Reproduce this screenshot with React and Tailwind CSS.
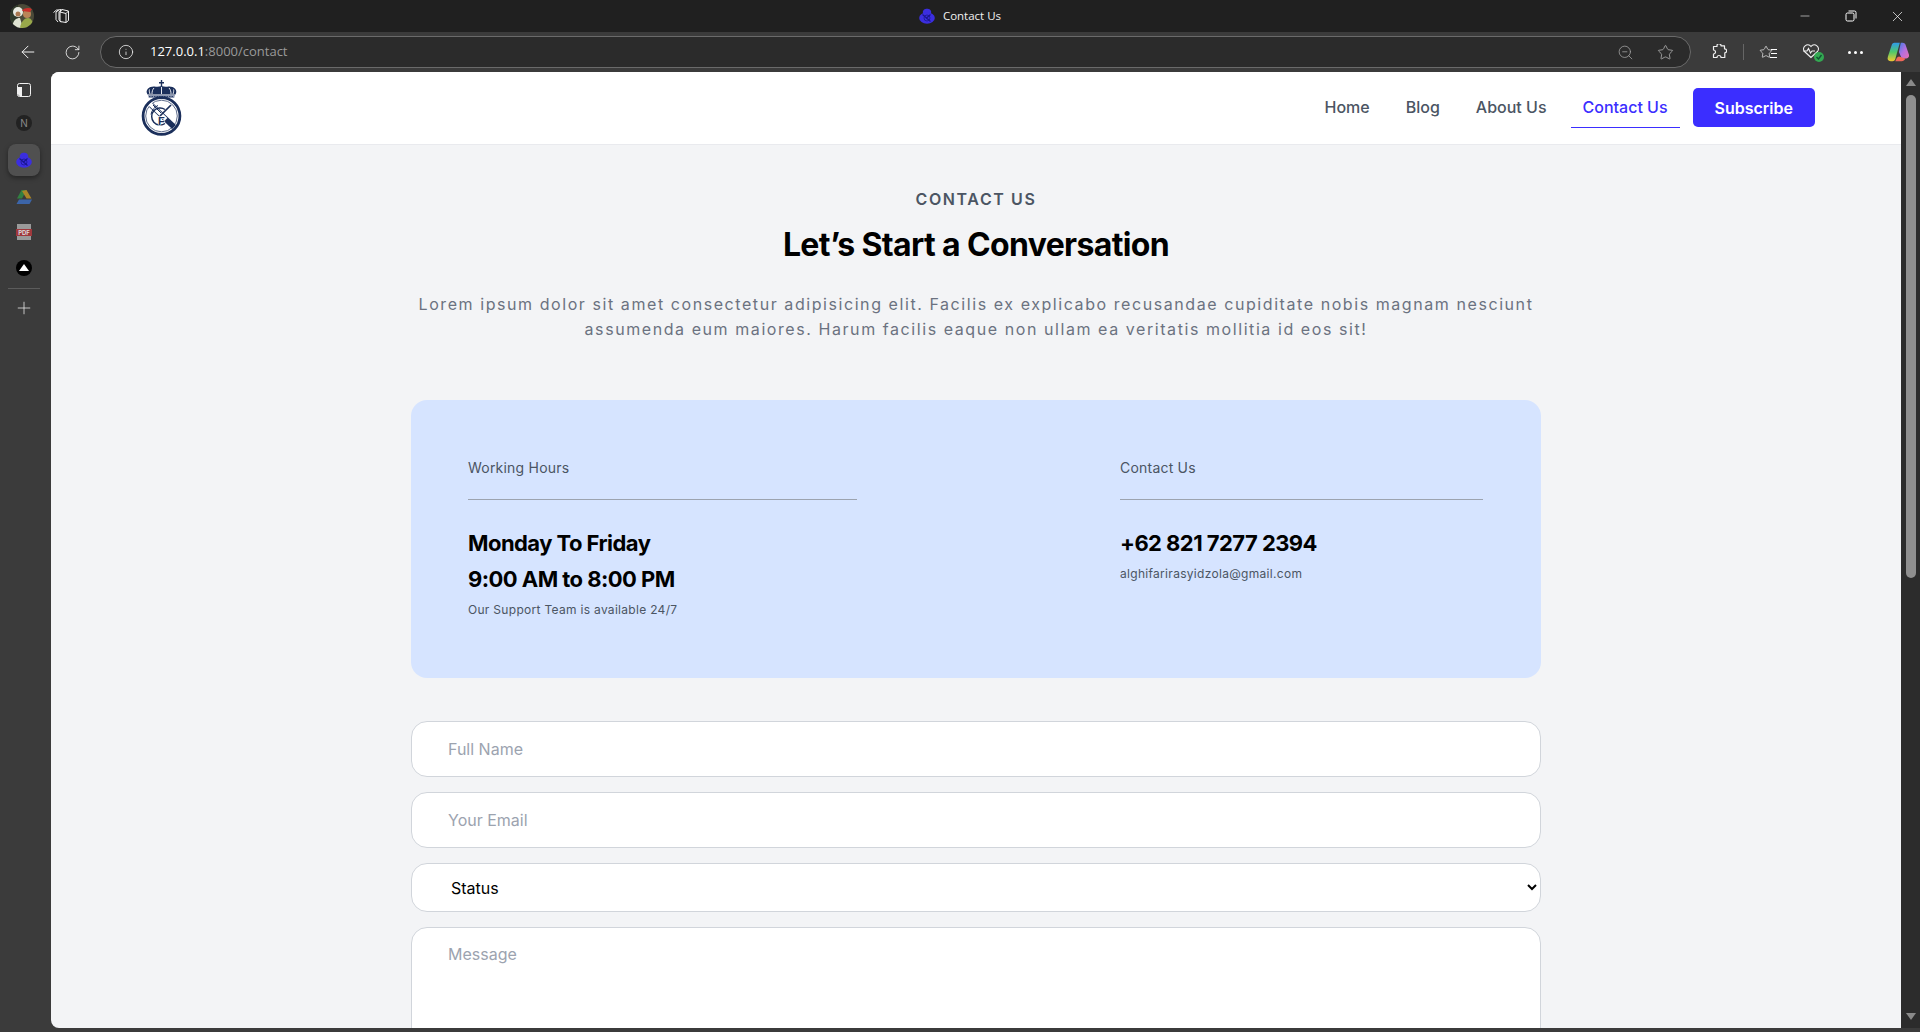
import { ArrowLeft, RotateCw, Info, ZoomOut, Star, Minus, X, Plus } from "lucide-react";

const inter = "font-['Inter',sans-serif]";
const navy = "#1b2f5b";

function Crest({ className }) {
  return (
    <svg viewBox="0 0 41 56" className={className} fill="none">
      <path d="M20.500 0v6M18 2.800h5" stroke={navy} strokeWidth="1.400" />
      <path d="M6.500 14.500C3.500 9.500 9 6 13.500 6.500c2.500.3 4.500.3 7-.5 2.500.8 4.500.8 7 .5C32 6 37.500 9.500 34.500 14.500z" fill={navy} />
      <path d="M13 8c-1.500 1.500-2 3.500-2 6M20.500 7v7M28 8c1.500 1.500 2 3.500 2 6M8.500 9.500c-.5 1.500 0 3 .5 4.500M32.500 9.500c.5 1.500 0 3-.5 4.500" stroke="#fff" strokeWidth="0.900" />
      <path d="M7 15h27l-.8 3H7.800z" fill="#8f9ab3" />
      <path d="M8 16.500h25" stroke={navy} strokeWidth="0.800" strokeDasharray="1.500 1" />
      <circle cx="20.500" cy="36" r="18.400" stroke={navy} strokeWidth="2.800" />
      <circle cx="20.500" cy="36" r="15.800" stroke={navy} strokeWidth="0.700" />
      <path d="M10 25l23 22" stroke={navy} strokeWidth="5.500" />
      <path d="M9 24l16 15.300" stroke="#fff" strokeWidth="3.900" />
      <path d="M30 25L19 36" stroke={navy} strokeWidth="1.700" />
      <path d="M12 25l8 8" stroke={navy} strokeWidth="1" />
      <path d="M24 29.500a8.500 8.500 0 1 0 0 14" stroke={navy} strokeWidth="1.500" />
      <path d="M17 25.500a12 12 0 0 0-7 9" stroke={navy} strokeWidth="1" />
      <text x="17" y="44.500" fontSize="11" fontWeight="700" fontFamily="Liberation Sans, sans-serif" fill={navy} stroke="#fff" strokeWidth="1" paintOrder="stroke">F</text>
    </svg>
  );
}

// small blue tab favicon, at this size the crest is just a blob
function Favicon({ className }) {
  return (
    <svg viewBox="0 0 16 16" className={className}>
      <path d="M4 5.500C3 2 6 .8 8 .8s5 1.200 4 4.700z" fill="#3b2ee0" />
      <ellipse cx="8" cy="10" rx="7.800" ry="5.800" fill="#3b2ee0" />
      <path d="M3.500 6.500l8 7M11.500 6.500L7 10.500" stroke="#1a1690" strokeWidth="1.200" />
      <circle cx="8" cy="10" r="3" fill="none" stroke="#1a1690" strokeWidth="0.800" />
    </svg>
  );
}

function Avatar() {
  return (
    <svg viewBox="0 0 24 24" className="ml-[10px] h-6 w-6 rounded-full">
      <rect width="24" height="24" fill="#4a4a38" />
      <path d="M0 0h8v24H0z" fill="#2f3a2a" />
      <circle cx="8" cy="8" r="5" fill="#e8ebe2" />
      <circle cx="8" cy="10" r="2.500" fill="#a9784f" />
      <path d="M2 24c1-8 4-10 8-10l3 10z" fill="#dfe3d2" />
      <circle cx="17" cy="10" r="4" fill="#b98558" />
      <path d="M12 7c1-3 7-4 10-2l-2 3z" fill="#c9302c" />
      <path d="M10 24c1-7 5-10 8-10s5 3 6 10z" fill="#98a84a" />
    </svg>
  );
}

function TitleBar() {
  return (
    <div className="grid h-8 shrink-0 grid-cols-[1fr_auto_1fr] items-center bg-[#202020] text-white">
      <div className="flex items-center">
        <Avatar />
        <svg viewBox="0 0 18 18" className="ml-[18px] h-[18px] w-[18px]" fill="none" stroke="#f0f0f0" strokeWidth="1">
          <path d="M1.500 5.500l3-2.500h2l-2.500 2v7.500l2 2.500M4.500 4.500l3-2 2 .2-2.500 2v8l2 2.500" />
          <path d="M8 5l2-2.500 6.500 1.500v9.500l-2.500 2L8 14.500z" />
          <path d="M8 5l6 1.500v9M14 6.500l2.500-2.500" />
        </svg>
      </div>
      <div className="flex items-center">
        <Favicon className="mr-[8px] h-4 w-4" />
        <span className="font-['Open_Sans',sans-serif] text-[11.5px] text-[#f0f0f0]">Contact Us</span>
      </div>
      <div className="flex items-center justify-end">
        <div className="flex w-[46px] justify-center"><Minus size={14} strokeWidth={1} /></div>
        <svg viewBox="0 0 12 12" className="mx-[17px] h-3 w-3" fill="none" stroke="#fff" strokeWidth="1">
          <rect x="1" y="3" width="8" height="8" rx="1.500" />
          <path d="M3.500 1h6a1.500 1.500 0 0 1 1.500 1.500v6" />
        </svg>
        <div className="flex w-[46px] justify-center"><X size={17} strokeWidth={1} /></div>
      </div>
    </div>
  );
}

function Toolbar() {
  return (
    <div className="flex h-10 shrink-0 items-center bg-[#3b3b3b] text-[#f0f0f0]">
      <ArrowLeft size={20} strokeWidth={1.200} className="ml-[18px] shrink-0" />
      <RotateCw size={17} strokeWidth={1.200} className="ml-[26px] shrink-0" />
      <div className="ml-[19px] flex h-[32px] w-[1591px] shrink-0 items-center rounded-full border border-[#6a6a6a] bg-[#2b2b2b]">
        <Info size={16} strokeWidth={1.200} className="ml-[17px]" />
        <span className="ml-4 font-['Open_Sans',sans-serif] text-[13px] text-white">
          127.0.0.1<span className="text-[#9a9a9a]">:8000/contact</span>
        </span>
        <ZoomOut size={17} strokeWidth={1.100} className="ml-auto text-[#a5a5a5]" />
        <Star size={17} strokeWidth={1.100} className="ml-[23px] mr-[16px] text-[#b5b5b5]" />
      </div>
      <svg viewBox="0 0 16 16" className="ml-5 h-4 w-4 shrink-0" fill="none" stroke="#f0f0f0" strokeWidth="1.200">
        <path d="M6 1.500a2 2 0 0 1 4 .3h3.500v3a2 2 0 0 1 .3 4v4.700H10a2 2 0 0 0-4 0H2.500V10a2 2 0 0 0 0-4V2.500H6z" strokeLinejoin="round" />
      </svg>
      <div className="ml-4 h-4 w-px shrink-0 bg-[#666]" />
      <div className="relative ml-[15px] h-4 w-[18px] shrink-0">
        <Star size={14} strokeWidth={1.200} className="absolute left-0 top-[1px]" />
        <div className="absolute right-0 top-[5px] h-px w-[6px] bg-white" />
        <div className="absolute right-0 top-[9px] h-px w-[6px] bg-white" />
        <div className="absolute right-0 top-[13px] h-px w-[7px] bg-white" />
      </div>
      <div className="relative ml-[25px] h-5 w-[19px] shrink-0">
        <svg viewBox="0 0 18 16" className="absolute left-0 top-[1px] h-4 w-[18px]" fill="none" stroke="#f0f0f0" strokeWidth="1.100">
          <path d="M9 14.500L2.500 8.500C-1 4.500 5.500-1 9 3.500c3.500-4.500 10 1 6.500 5z" />
          <path d="M1 8h4l1.500-2.500 2 4.500 1.500-2h3" />
        </svg>
        <div className="absolute bottom-0 right-[-3px] flex h-[10px] w-[10px] items-center justify-center rounded-full bg-[#33a852]">
          <svg viewBox="0 0 8 8" className="h-2 w-2" fill="none" stroke="#153" strokeWidth="1.400"><path d="M1.500 4l2 2 3-4" /></svg>
        </div>
      </div>
      <div className="ml-[27px] flex shrink-0 gap-[3px]">
        <div className="h-[3px] w-[3px] rounded-full bg-white" />
        <div className="h-[3px] w-[3px] rounded-full bg-white" />
        <div className="h-[3px] w-[3px] rounded-full bg-white" />
      </div>
      <svg viewBox="0 0 24 24" className="ml-[24px] h-[22px] w-[22px] shrink-0">
        <defs>
          <linearGradient id="cpA" x1="0" y1="0" x2="0" y2="1">
            <stop offset="0" stopColor="#2f9be8" /><stop offset="0.5" stopColor="#4fc86a" /><stop offset="1" stopColor="#f2c830" />
          </linearGradient>
          <linearGradient id="cpB" x1="0" y1="0" x2="1" y2="1">
            <stop offset="0" stopColor="#3d7ee8" /><stop offset="0.5" stopColor="#b56fe0" /><stop offset="1" stopColor="#e86fb0" />
          </linearGradient>
        </defs>
        <path d="M8 2h6l-5 18c-.5 1.500-1.500 2-3 2H4c-3 0-4-2-3-5L5 5c.5-2 1.500-3 3-3z" fill="url(#cpA)" />
        <path d="M15 2h2c2 0 3 1 3.500 3L24 15c.5 2-1 4-3 4h-5l-3-7z" fill="url(#cpB)" />
        <path d="M9 22h7c2 0 3-1 4-3l-7-2-2 1z" fill="#f0685a" />
      </svg>
    </div>
  );
}

function RailSlot({ children }) {
  return <div className="flex h-[35.600px] items-center justify-center">{children}</div>;
}

function Rail() {
  return (
    <div className="flex w-[51px] shrink-0 flex-col items-center bg-[#3b3b3b] pr-[3px]">
      <RailSlot>
        <svg viewBox="0 0 14 14" className="h-[14px] w-[14px]" fill="none">
          <rect x="0.500" y="0.500" width="13" height="13" rx="2" stroke="#f0f0f0" />
          <path d="M1 4h4v9H3a2 2 0 0 1-2-2z" fill="#f0f0f0" />
        </svg>
      </RailSlot>
      <RailSlot>
        <div className="mb-[4px] flex h-4 w-4 items-center justify-center rounded-full bg-[#222] font-['Inter',sans-serif] text-[10px] text-[#888]">N</div>
      </RailSlot>
      <RailSlot>
        <div className="mb-[2px] flex h-8 w-8 items-center justify-center rounded-lg bg-[#505050] shadow-[0_2px_5px_rgba(0,0,0,0.4)]">
          <Favicon className="h-4 w-4" />
        </div>
      </RailSlot>
      <RailSlot>
        <svg viewBox="0 0 16 14" className="h-[14px] w-4 opacity-70">
          <path d="M5.500 0h5L6 8.500H1z" fill="#2f9e44" />
          <path d="M10.500 0l5 8.500h-5L6 1z" fill="#d9a520" />
          <path d="M3 9.500h13L13.500 14h-13z" fill="#3d78d8" />
        </svg>
      </RailSlot>
      <RailSlot>
        <div className="relative h-4 w-[14px] bg-[#9a9a9a]">
          <div className="absolute left-[-1px] right-[-1px] top-[5px] flex h-[7px] items-center justify-center bg-[#a0383c] font-['Inter',sans-serif] text-[6px] font-bold text-[#ddd]">PDF</div>
        </div>
      </RailSlot>
      <RailSlot>
        <div className="flex h-4 w-4 items-center justify-center rounded-full bg-black">
          <div className="h-0 w-0 border-x-[5px] border-b-[7px] border-x-transparent border-b-white" />
        </div>
      </RailSlot>
      <div className="mt-[2px] h-px w-8 bg-[#5c5c5c]" />
      <Plus size={20} strokeWidth={0.900} className="mt-[9px] text-[#f0f0f0]" />
    </div>
  );
}

function NavBar() {
  const links = ["Home", "Blog", "About Us"];
  return (
    <nav className="flex h-[73px] shrink-0 items-center justify-between border-b border-[#e9eaee] bg-white pl-[90px] pr-[86px]">
      <Crest className="h-[56px] w-[41px]" />
      <div className="mb-px flex items-center gap-3 text-base font-medium text-[#4b5563]">
        {links.map((l) => (
          <a key={l} className="border-b border-transparent px-3 py-2">{l}</a>
        ))}
        <a className="border-b border-[#3b2eff] px-3 py-2 text-[#3b2eff]">Contact Us</a>
        <button className="ml-[1px] h-[39px] rounded-[5px] bg-[#3b2eff] px-[22px] font-semibold text-white">Subscribe</button>
      </div>
    </nav>
  );
}

function InfoColumn({ label, className, children }) {
  return (
    <div className={className}>
      <p className="text-sm leading-5 tracking-[0.015em] text-[#4b5563]">{label}</p>
      <hr className="mb-[25px] mt-[21px] border-[#9ca3af]" />
      {children}
    </div>
  );
}

function ContactForm() {
  const field = "w-full rounded-2xl border border-[#d1d5db] bg-white px-9 text-base text-black placeholder:text-[#9ca3af]";
  return (
    <form className="mt-[43px] flex flex-col gap-[15px]">
      <input className={`${field} h-[56px]`} placeholder="Full Name" />
      <input className={`${field} h-[56px]`} placeholder="Your Email" />
      <select className={`${field} h-[49px] pl-[35px]`} defaultValue="Status">
        <option>Status</option>
      </select>
      <textarea className={`${field} h-[220px] resize-none py-[14px]`} placeholder="Message" />
    </form>
  );
}

function Scrollbar() {
  return (
    <div className="flex w-[19px] shrink-0 flex-col items-center justify-between bg-[#2c2c2c] py-[7px]">
      <div className="flex w-full flex-1 flex-col items-center">
        <div className="h-0 w-0 border-x-[5px] border-b-[7px] border-x-transparent border-b-[#8a8a8a]" />
        <div className="mt-[9px] h-[483px] w-[10px] rounded-full bg-[#8f8f8f]" />
      </div>
      <div className="mb-px h-0 w-0 border-x-[5px] border-t-[7px] border-x-transparent border-t-[#8a8a8a]" />
    </div>
  );
}

export default function App() {
  return (
    <div className="flex h-[1032px] w-full flex-col overflow-hidden bg-[#3b3b3b]">
      <TitleBar />
      <Toolbar />
      <div className="flex min-h-0 flex-1 pb-1">
        <Rail />
        <div className={`${inter} flex min-w-0 flex-1 flex-col overflow-hidden rounded-tl-lg rounded-bl-lg bg-[#f3f4f6]`}>
          <NavBar />
          <main className="mx-auto w-[1130px] pt-[42px]">
            <div className="text-center">
              <p className="text-base font-semibold leading-6 tracking-widest text-[#4b5563]">CONTACT US</p>
              <h1 className="mt-4 text-[32px] font-bold leading-9 tracking-[-0.02em] text-black">Let’s Start a Conversation</h1>
              <p className="mt-[29px] text-base leading-[25px] tracking-[1.57px] text-[#6b7280]">
                Lorem ipsum dolor sit amet consectetur adipisicing elit. Facilis ex explicabo recusandae cupiditate nobis magnam nesciunt
                <br />
                assumenda eum maiores. Harum facilis eaque non ullam ea veritatis mollitia id eos sit!
              </p>
            </div>
            <section className="mt-[58px] flex h-[278px] justify-between rounded-2xl bg-[#d6e4ff] pl-[57px] pr-[58px] pt-[58px]">
              <InfoColumn label="Working Hours" className="w-[389px]">
                <p className="text-[22px] font-bold leading-9 tracking-tight text-black">Monday To Friday</p>
                <p className="text-[22px] font-bold leading-9 tracking-tight text-black">9:00 AM to 8:00 PM</p>
                <p className="mt-[3px] text-xs leading-5 tracking-[0.025em] text-[#4b5563]">Our Support Team is available 24/7</p>
              </InfoColumn>
              <InfoColumn label="Contact Us" className="w-[363px]">
                <p className="text-[22px] font-bold leading-9 tracking-tight text-black">+62 821 7277 2394</p>
                <p className="mt-[3px] text-xs leading-5 tracking-[0.025em] text-[#4b5563]">alghifarirasyidzola@gmail.com</p>
              </InfoColumn>
            </section>
            <ContactForm />
          </main>
        </div>
        <Scrollbar />
      </div>
    </div>
  );
}
